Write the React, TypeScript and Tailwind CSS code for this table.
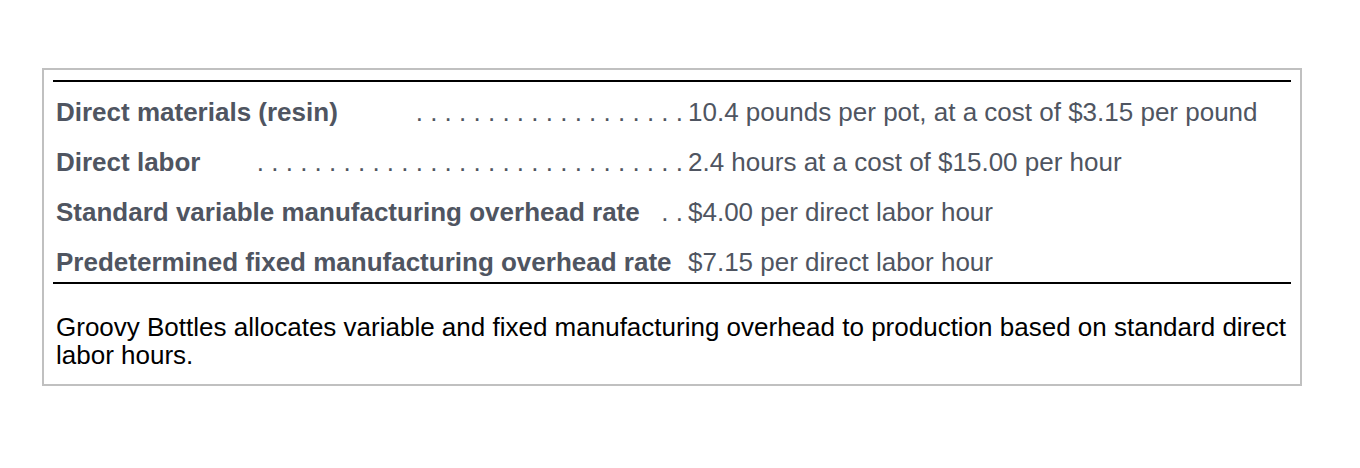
const ROWS = [
    { label: "Direct materials (resin)", dots: 19, value: "10.4 pounds per pot, at a cost of $3.15 per pound" },
    { label: "Direct labor", dots: 30, value: "2.4 hours at a cost of $15.00 per hour" },
    { label: "Standard variable manufacturing overhead rate", dots: 2, value: "$4.00 per direct labor hour" },
    { label: "Predetermined fixed manufacturing overhead rate", dots: 0, value: "$7.15 per direct labor hour" },
]

function Leader({ count }: { count: number }) {
    if (!count) return null
    const text = Array.from({ length: count }, () => ".").join(" ")
    return <span className="whitespace-pre text-[#4f5561] pr-[5px]">{text}</span>
}

export default function App() {
    return (
        <div className="min-h-screen bg-white pt-[68px] pl-[42px] font-['Liberation_Sans',Arial,sans-serif]">
            <div className="w-[1260px] border-2 border-[#c0c0c0] px-[9px] pt-[10px]">
                <div className="border-t-2 border-black" />
                <div className="flex flex-col">
                    {ROWS.map(({ label, dots, value }, index) => (
                        <div key={index} className="h-[50px] pt-[10px] flex text-[26px] leading-[40px] text-[#4f5561]">
                            <div className="w-[635px] flex justify-between pl-[3px]">
                                <span className="font-bold whitespace-nowrap">{label}</span>
                                <Leader count={dots} />
                            </div>
                            <span className="whitespace-nowrap">{value}</span>
                        </div>
                    ))}
                </div>
                <div className="border-t-2 border-black" />
                <p className="pt-[29px] pb-[15px] pl-[3px] text-[26px] leading-[28px] text-black">
                    Groovy Bottles allocates variable and fixed manufacturing overhead to production based on standard direct labor hours.
                </p>
            </div>
        </div>
    )
}
